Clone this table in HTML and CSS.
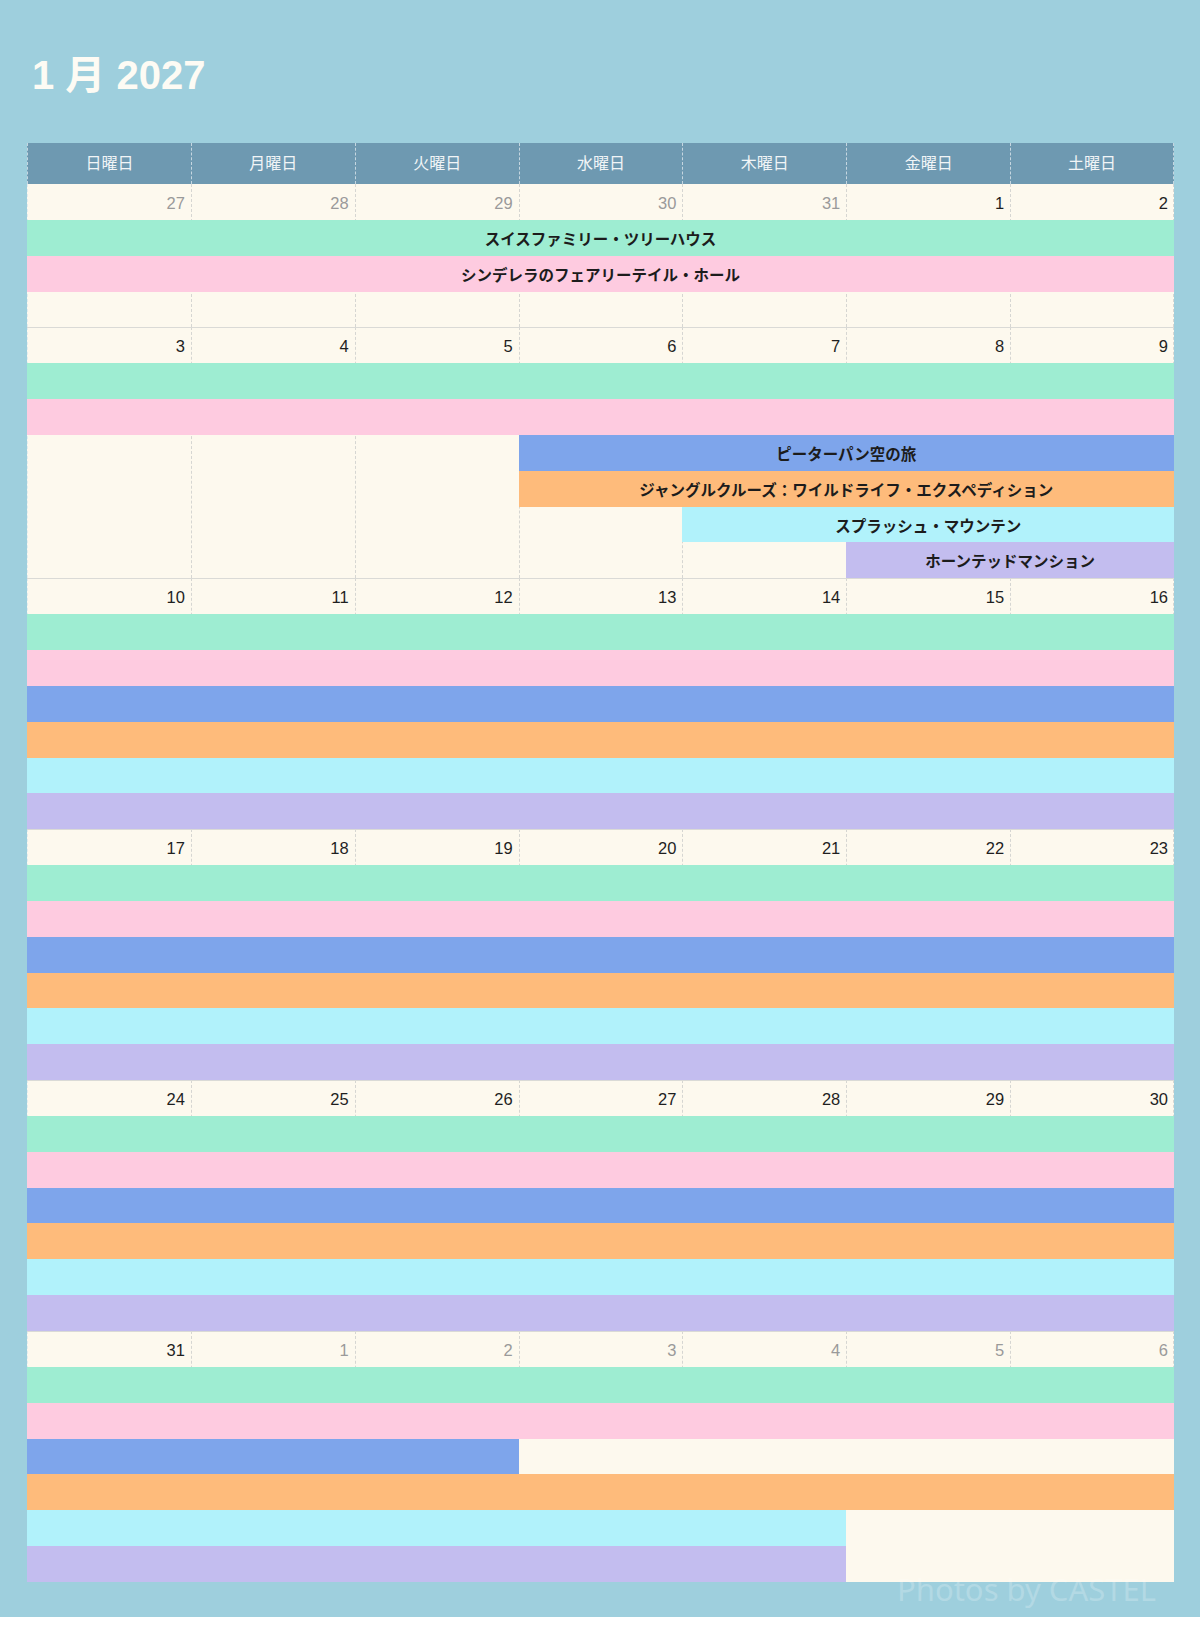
FILE: index.html
```html
<!DOCTYPE html>
<html lang="ja">
<head>
<meta charset="utf-8">
<title>1 月 2027</title>
<link rel="stylesheet" href="styles.css">
</head>
<body>
<div class="page">
  <h1 class="title">1 月 2027</h1>
  <div class="calendar">
    <div class="head">
      <div class="hcell">日曜日</div>
      <div class="hcell">月曜日</div>
      <div class="hcell">火曜日</div>
      <div class="hcell">水曜日</div>
      <div class="hcell">木曜日</div>
      <div class="hcell">金曜日</div>
      <div class="hcell">土曜日</div>
    </div>

    <!-- week 1 -->
    <div class="week rows4">
      <div class="col c1"></div><div class="col c2"></div><div class="col c3"></div><div class="col c4"></div><div class="col c5"></div><div class="col c6"></div><div class="col c7"></div>
      <div class="date c1 other">27</div><div class="date c2 other">28</div><div class="date c3 other">29</div><div class="date c4 other">30</div><div class="date c5 other">31</div><div class="date c6">1</div><div class="date c7">2</div>
      <div class="bar green r2 s1 e8">スイスファミリー・ツリーハウス</div>
      <div class="bar pink r3 s1 e8">シンデレラのフェアリーテイル・ホール</div>
    </div>

    <!-- week 2 -->
    <div class="week rows7">
      <div class="col c1"></div><div class="col c2"></div><div class="col c3"></div><div class="col c4"></div><div class="col c5"></div><div class="col c6"></div><div class="col c7"></div>
      <div class="date c1">3</div><div class="date c2">4</div><div class="date c3">5</div><div class="date c4">6</div><div class="date c5">7</div><div class="date c6">8</div><div class="date c7">9</div>
      <div class="bar green r2 s1 e8"></div>
      <div class="bar pink r3 s1 e8"></div>
      <div class="bar blue r4 s4 e8">ピーターパン空の旅</div>
      <div class="bar orange r5 s4 e8">ジャングルクルーズ：ワイルドライフ・エクスペディション</div>
      <div class="bar cyan r6 s5 e8">スプラッシュ・マウンテン</div>
      <div class="bar purple r7 s6 e8">ホーンテッドマンション</div>
    </div>

    <!-- week 3 -->
    <div class="week rows7">
      <div class="col c1"></div><div class="col c2"></div><div class="col c3"></div><div class="col c4"></div><div class="col c5"></div><div class="col c6"></div><div class="col c7"></div>
      <div class="date c1">10</div><div class="date c2">11</div><div class="date c3">12</div><div class="date c4">13</div><div class="date c5">14</div><div class="date c6">15</div><div class="date c7">16</div>
      <div class="bar green r2 s1 e8"></div>
      <div class="bar pink r3 s1 e8"></div>
      <div class="bar blue r4 s1 e8"></div>
      <div class="bar orange r5 s1 e8"></div>
      <div class="bar cyan r6 s1 e8"></div>
      <div class="bar purple r7 s1 e8"></div>
    </div>

    <!-- week 4 -->
    <div class="week rows7">
      <div class="col c1"></div><div class="col c2"></div><div class="col c3"></div><div class="col c4"></div><div class="col c5"></div><div class="col c6"></div><div class="col c7"></div>
      <div class="date c1">17</div><div class="date c2">18</div><div class="date c3">19</div><div class="date c4">20</div><div class="date c5">21</div><div class="date c6">22</div><div class="date c7">23</div>
      <div class="bar green r2 s1 e8"></div>
      <div class="bar pink r3 s1 e8"></div>
      <div class="bar blue r4 s1 e8"></div>
      <div class="bar orange r5 s1 e8"></div>
      <div class="bar cyan r6 s1 e8"></div>
      <div class="bar purple r7 s1 e8"></div>
    </div>

    <!-- week 5 -->
    <div class="week rows7">
      <div class="col c1"></div><div class="col c2"></div><div class="col c3"></div><div class="col c4"></div><div class="col c5"></div><div class="col c6"></div><div class="col c7"></div>
      <div class="date c1">24</div><div class="date c2">25</div><div class="date c3">26</div><div class="date c4">27</div><div class="date c5">28</div><div class="date c6">29</div><div class="date c7">30</div>
      <div class="bar green r2 s1 e8"></div>
      <div class="bar pink r3 s1 e8"></div>
      <div class="bar blue r4 s1 e8"></div>
      <div class="bar orange r5 s1 e8"></div>
      <div class="bar cyan r6 s1 e8"></div>
      <div class="bar purple r7 s1 e8"></div>
    </div>

    <!-- week 6 -->
    <div class="week rows7">
      <div class="col c1"></div><div class="col c2"></div><div class="col c3"></div><div class="col c4"></div><div class="col c5"></div><div class="col c6"></div><div class="col c7"></div>
      <div class="date c1">31</div><div class="date c2 other">1</div><div class="date c3 other">2</div><div class="date c4 other">3</div><div class="date c5 other">4</div><div class="date c6 other">5</div><div class="date c7 other">6</div>
      <div class="bar green r2 s1 e8"></div>
      <div class="bar pink r3 s1 e8"></div>
      <div class="bar blue r4 s1 e4"></div>
      <div class="blank r4 s4 e8"></div>
      <div class="bar orange r5 s1 e8"></div>
      <div class="bar cyan r6 s1 e6"></div>
      <div class="bar purple r7 s1 e6"></div>
      <div class="blank r6-7 s6 e8"></div>
    </div>
  </div>
  <div class="watermark">Photos by CASTEL</div>
</div>
</body>
</html>
```

FILE: styles.css
```css
* { box-sizing: border-box; }

html, body {
  margin: 0;
  padding: 0;
  background: #ffffff;
}

.page {
  position: relative;
  height: 1617px;
  background: #9ecfdd;
  padding: 50px 26px 0 27px;
  font-family: "Liberation Sans", "Noto Sans CJK JP", sans-serif;
}

.title {
  margin: 0 0 43px 0;
  padding-left: 5px;
  height: 50px;
  line-height: 50px;
  font-size: 40px;
  font-weight: 700;
  color: #fdfbf4;
  font-family: "Liberation Sans", "Noto Sans CJK JP", sans-serif;
}

.calendar {
  width: 1147px;
}

.head {
  display: grid;
  grid-template-columns: repeat(7, 1fr);
  height: 41px;
  background: #6e99b1;
}

.hcell {
  display: flex;
  align-items: center;
  justify-content: center;
  padding-bottom: 3px;
  color: #f1f5f7;
  font-family: "Noto Sans CJK JP", sans-serif;
  font-size: 16px;
  border-left: 1px dashed rgba(255, 255, 255, 0.6);
}
.hcell:last-child { border-right: 1px dashed rgba(255, 255, 255, 0.6); }

.week {
  display: grid;
  grid-template-columns: repeat(7, 1fr);
  background: #fdf9ee;
}
.rows4 { grid-template-rows: repeat(4, 35.85px); }
.rows7 { grid-template-rows: repeat(7, 35.85px); }

.col {
  grid-row: 1 / -1;
  border-left: 1px dashed #d6d6d2;
}
.col.c1 { border-left-color: #e2ecee; }
.col.c7 { border-right: 1px dashed #d6d6d2; }

.c1 { grid-column: 1; }
.c2 { grid-column: 2; }
.c3 { grid-column: 3; }
.c4 { grid-column: 4; }
.c5 { grid-column: 5; }
.c6 { grid-column: 6; }
.c7 { grid-column: 7; }

.date {
  grid-row: 1;
  display: flex;
  align-items: center;
  justify-content: flex-end;
  padding-right: 6px;
  padding-top: 3px;
  font-size: 16.5px;
  color: #1f1f1f;
}
.date.other { color: #9a9a9a; }
.week + .week .date { box-shadow: inset 0 1px 0 #dadad6; }

.r2 { grid-row: 2; }
.r3 { grid-row: 3; }
.r4 { grid-row: 4; }
.r5 { grid-row: 5; }
.r6 { grid-row: 6; }
.r7 { grid-row: 7; }
.r6-7 { grid-row: 6 / 8; }

.s1 { grid-column-start: 1; }
.s4 { grid-column-start: 4; }
.s5 { grid-column-start: 5; }
.s6 { grid-column-start: 6; }
.e4 { grid-column-end: 4; }
.e6 { grid-column-end: 6; }
.e8 { grid-column-end: 8; }

.bar {
  display: flex;
  align-items: center;
  justify-content: center;
  font-family: "Noto Sans CJK JP", sans-serif;
  font-weight: 700;
  font-size: 15.5px;
  color: #1c1c1c;
  white-space: nowrap;
}
.green  { background: #9eedd2; }
.pink   { background: #fecbe0; }
.blue   { background: #7ea5eb; }
.orange { background: #febb7b; }
.cyan   { background: #b1f2fb; }
.purple { background: #c3bdef; }

.blank { background: #fdf9ee; }

.watermark {
  position: absolute;
  right: 44px;
  top: 1568px;
  font-family: "Noto Sans", sans-serif;
  font-size: 31px;
  color: rgba(255, 255, 255, 0.22);
  white-space: nowrap;
}
```
